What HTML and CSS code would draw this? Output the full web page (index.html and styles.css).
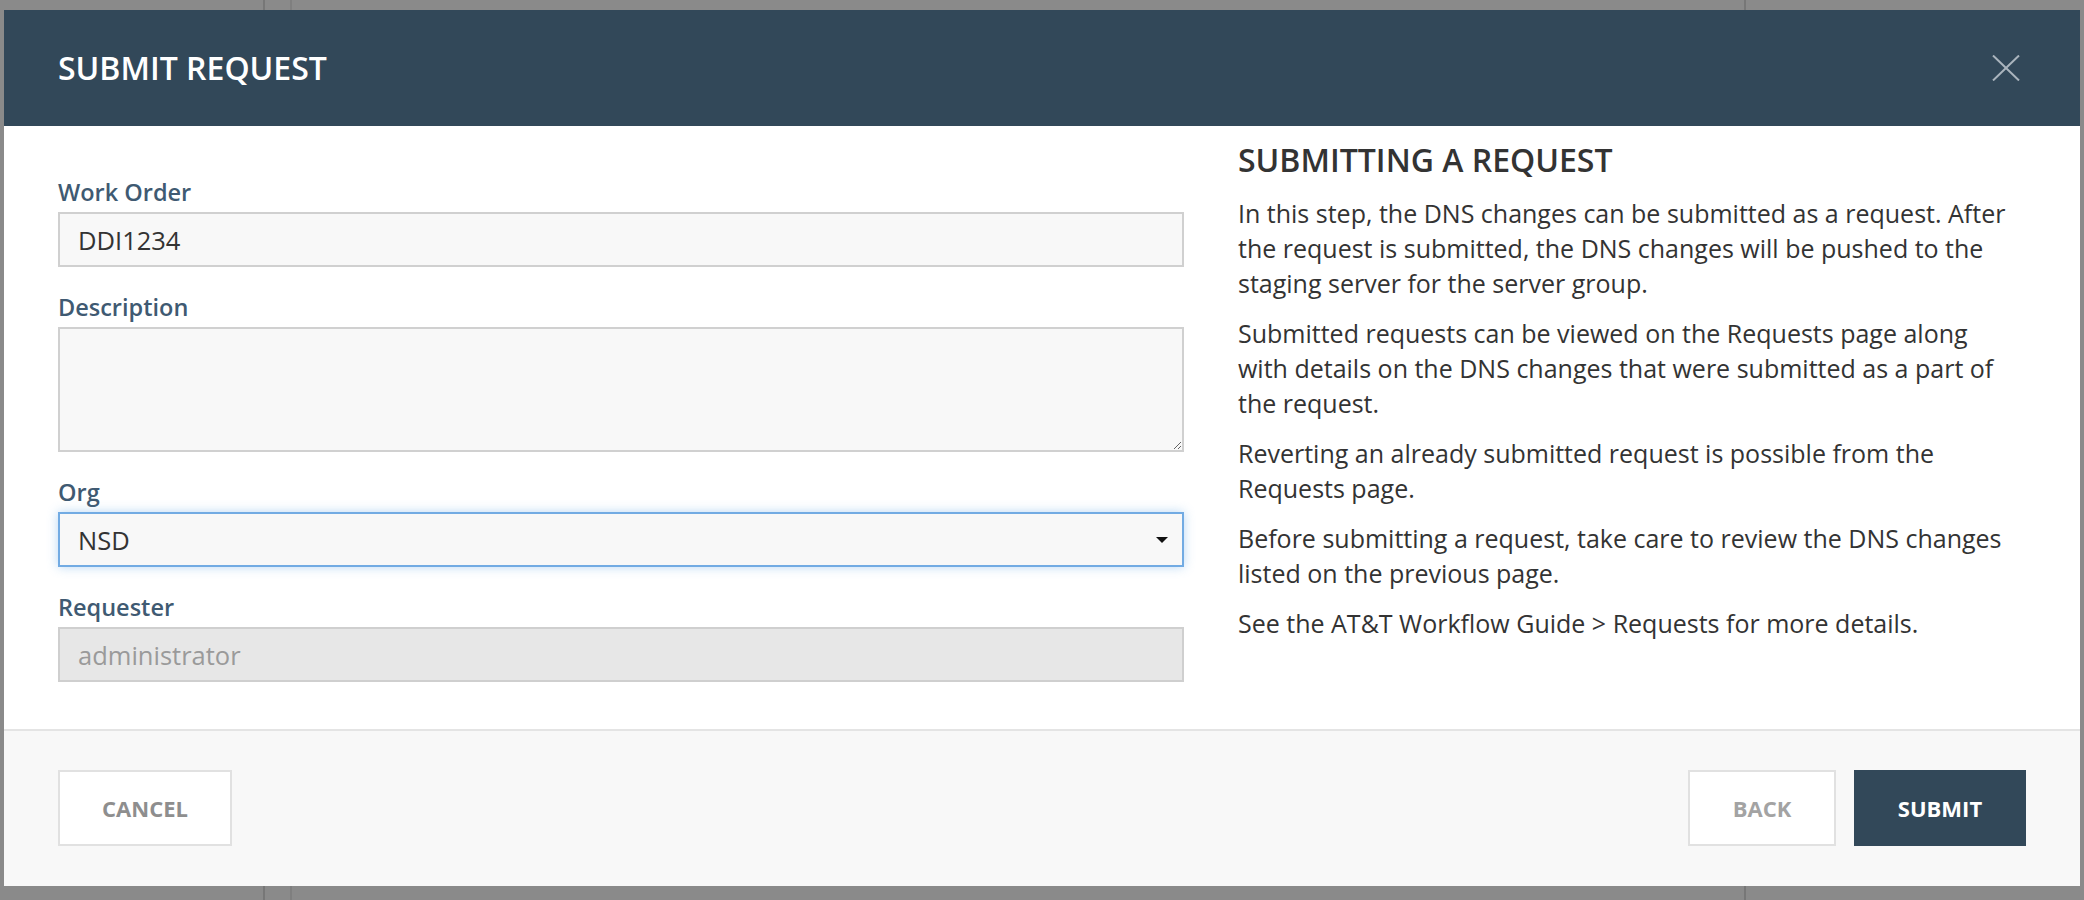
FILE: index.html
```html
<!DOCTYPE html>
<html lang="en">
<head>
<meta charset="utf-8">
<title>Submit Request</title>
<link rel="stylesheet" href="styles.css">
</head>
<body>
<div class="backdrop">
  <div class="modal">
    <header class="modal-header">
      <h1 class="modal-title">SUBMIT REQUEST</h1>
      <button class="close" aria-label="Close">
        <svg width="28" height="26" viewBox="0 0 28 26"><path d="M1 0.5 L27 25.5 M27 0.5 L1 25.5" stroke="#aab4bd" stroke-width="2" fill="none"/></svg>
      </button>
    </header>
    <div class="modal-body">
      <form class="form">
        <div class="group">
          <label class="label">Work Order</label>
          <input class="field" type="text" value="DDI1234">
        </div>
        <div class="group">
          <label class="label">Description</label>
          <textarea class="field area"></textarea>
        </div>
        <div class="group">
          <label class="label">Org</label>
          <div class="field select focused">
            <span>NSD</span>
            <span class="caret"></span>
          </div>
        </div>
        <div class="group">
          <label class="label">Requester</label>
          <input class="field disabled" type="text" value="administrator" disabled>
        </div>
      </form>
      <aside class="help">
        <h2 class="help-title">SUBMITTING A REQUEST</h2>
        <p>In this step, the DNS changes can be submitted as a request. After<br>the request is submitted, the DNS changes will be pushed to the<br>staging server for the server group.</p>
        <p>Submitted requests can be viewed on the Requests page along<br>with details on the DNS changes that were submitted as a part of<br>the request.</p>
        <p>Reverting an already submitted request is possible from the<br>Requests page.</p>
        <p>Before submitting a request, take care to review the DNS changes<br>listed on the previous page.</p>
        <p>See the AT&amp;T Workflow Guide &gt; Requests for more details.</p>
      </aside>
    </div>
    <footer class="modal-footer">
      <button class="btn btn-cancel">CANCEL</button>
      <div class="btn-group">
        <button class="btn btn-back">BACK</button>
        <button class="btn btn-primary">SUBMIT</button>
      </div>
    </footer>
  </div>
</div>
</body>
</html>
```

FILE: styles.css
```css
* { box-sizing: border-box; }

html, body {
  margin: 0;
  height: 100%;
}

body {
  font-family: "Open Sans", "Liberation Sans", sans-serif;
  background-color: #8a8a8a;
  background-image:
    linear-gradient(to right,
      transparent 263px, #777 263px, #777 265px, transparent 265px,
      transparent 290px, #7f7f7f 290px, #7f7f7f 292px, transparent 292px,
      transparent 1744px, #777 1744px, #777 1746px, transparent 1746px);
}

.backdrop {
  padding: 10px 4px 14px 4px;
}

.modal {
  background: #fff;
  display: flex;
  flex-direction: column;
}

.modal-header {
  height: 116px;
  background: #324859;
  display: flex;
  align-items: center;
  justify-content: space-between;
  padding: 0 60px 0 54px;
}

.modal-title {
  margin: 0;
  color: #fff;
  font-size: 32px;
  font-weight: 600;
  line-height: 1;
}

.close {
  background: none;
  border: 0;
  padding: 0;
  width: 28px;
  height: 26px;
  display: block;
}
.close svg { display: block; }

.modal-body {
  display: grid;
  grid-template-columns: 1126px 1fr;
  column-gap: 54px;
  padding: 16px 40px 47px 54px;
}

.form {
  padding-top: 35px;
  display: flex;
  flex-direction: column;
  gap: 25px;
}

.group {
  display: flex;
  flex-direction: column;
}

.label {
  font-size: 23.5px;
  font-weight: 600;
  line-height: 30px;
  color: #3f5a72;
  margin-bottom: 5px;
}

.field {
  height: 55px;
  width: 100%;
  border: 2px solid #d0d0d0;
  background: #f8f8f8;
  font-family: "Open Sans", "Liberation Sans", sans-serif;
  font-size: 25.5px;
  color: #333;
  padding: 0 18px;
  margin: 0;
  outline: none;
  border-radius: 0;
}

.area {
  height: 125px;
  resize: vertical;
  padding: 10px 18px;
}

.select {
  display: flex;
  align-items: center;
  justify-content: space-between;
  padding: 0 14px 0 18px;
}

.focused {
  border-color: #72abe3;
  box-shadow: 0 0 10px rgba(102, 168, 230, 0.45);
}

.caret {
  width: 0;
  height: 0;
  border-left: 6px solid transparent;
  border-right: 6px solid transparent;
  border-top: 6px solid #111;
}

.disabled {
  background: #e7e7e7;
  color: #9a9a9a;
  border-color: #cfcfcf;
}

.help {
  color: #333;
  white-space: nowrap;
}

.help-title {
  margin: 0 0 18px 0;
  font-size: 32px;
  font-weight: 600;
  line-height: 36px;
  color: #333;
}

.help p {
  margin: 0 0 15px 0;
  font-size: 25px;
  line-height: 35px;
}

.modal-footer {
  border-top: 2px solid #e4e4e4;
  background: #f8f8f8;
  padding: 39px 54px 40px 54px;
  display: flex;
  justify-content: space-between;
  align-items: center;
}

.btn-group {
  display: flex;
  gap: 18px;
}

.btn {
  height: 76px;
  padding: 0;
  background: #fff;
  border: 2px solid #e1e1e1;
  font-family: "Open Sans", "Liberation Sans", sans-serif;
  font-size: 22px;
  font-weight: 700;
  color: #8e8e8e;
  border-radius: 0;
  text-align: center;
}

.btn-cancel { width: 174px; }

.btn-back {
  width: 148px;
  color: #a3a3a3;
}

.btn-primary {
  width: 172px;
  background: #324859;
  border-color: #324859;
  color: #fff;
}
```
